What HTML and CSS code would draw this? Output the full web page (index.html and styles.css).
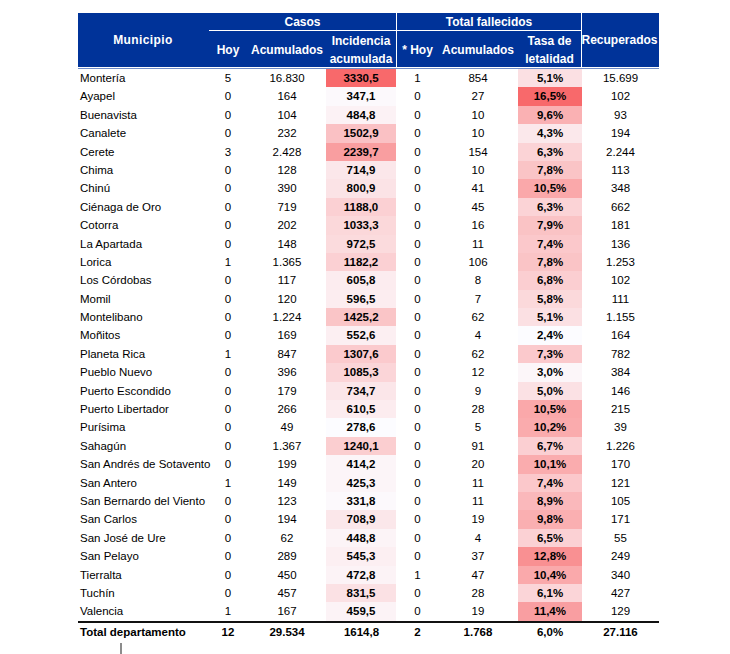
FILE: index.html
```html
<!DOCTYPE html>
<html lang="es">
<head>
<meta charset="utf-8">
<title>Casos por municipio</title>
<link rel="stylesheet" href="styles.css">
</head>
<body>
<div class="page">
  <div class="tbl">
    <div class="head">
      <div class="h muni">Municipio</div>
      <div class="h casos">Casos</div>
      <div class="h fall">Total fallecidos</div>
      <div class="h recup">Recuperados</div>
      <div class="h sub c2">Hoy</div>
      <div class="h sub c3">Acumulados</div>
      <div class="h sub c4 div">Incidencia<br>acumulada</div>
      <div class="h sub c5">* Hoy</div>
      <div class="h sub c6">Acumulados</div>
      <div class="h sub c7 div">Tasa de<br>letalidad</div>
    </div>
    <div class="sep"></div>
    <div class="body">
      <div class="row"><span class="name">Montería</span><span>5</span><span>16.830</span><span class="inc">3330,5</span><span>1</span><span>854</span><span class="tasa">5,1%</span><span>15.699</span></div>
      <div class="row"><span class="name">Ayapel</span><span>0</span><span>164</span><span class="inc">347,1</span><span>0</span><span>27</span><span class="tasa">16,5%</span><span>102</span></div>
      <div class="row"><span class="name">Buenavista</span><span>0</span><span>104</span><span class="inc">484,8</span><span>0</span><span>10</span><span class="tasa">9,6%</span><span>93</span></div>
      <div class="row"><span class="name">Canalete</span><span>0</span><span>232</span><span class="inc">1502,9</span><span>0</span><span>10</span><span class="tasa">4,3%</span><span>194</span></div>
      <div class="row"><span class="name">Cerete</span><span>3</span><span>2.428</span><span class="inc">2239,7</span><span>0</span><span>154</span><span class="tasa">6,3%</span><span>2.244</span></div>
      <div class="row"><span class="name">Chima</span><span>0</span><span>128</span><span class="inc">714,9</span><span>0</span><span>10</span><span class="tasa">7,8%</span><span>113</span></div>
      <div class="row"><span class="name">Chinú</span><span>0</span><span>390</span><span class="inc">800,9</span><span>0</span><span>41</span><span class="tasa">10,5%</span><span>348</span></div>
      <div class="row"><span class="name">Ciénaga de Oro</span><span>0</span><span>719</span><span class="inc">1188,0</span><span>0</span><span>45</span><span class="tasa">6,3%</span><span>662</span></div>
      <div class="row"><span class="name">Cotorra</span><span>0</span><span>202</span><span class="inc">1033,3</span><span>0</span><span>16</span><span class="tasa">7,9%</span><span>181</span></div>
      <div class="row"><span class="name">La Apartada</span><span>0</span><span>148</span><span class="inc">972,5</span><span>0</span><span>11</span><span class="tasa">7,4%</span><span>136</span></div>
      <div class="row"><span class="name">Lorica</span><span>1</span><span>1.365</span><span class="inc">1182,2</span><span>0</span><span>106</span><span class="tasa">7,8%</span><span>1.253</span></div>
      <div class="row"><span class="name">Los Córdobas</span><span>0</span><span>117</span><span class="inc">605,8</span><span>0</span><span>8</span><span class="tasa">6,8%</span><span>102</span></div>
      <div class="row"><span class="name">Momil</span><span>0</span><span>120</span><span class="inc">596,5</span><span>0</span><span>7</span><span class="tasa">5,8%</span><span>111</span></div>
      <div class="row"><span class="name">Montelibano</span><span>0</span><span>1.224</span><span class="inc">1425,2</span><span>0</span><span>62</span><span class="tasa">5,1%</span><span>1.155</span></div>
      <div class="row"><span class="name">Moñitos</span><span>0</span><span>169</span><span class="inc">552,6</span><span>0</span><span>4</span><span class="tasa">2,4%</span><span>164</span></div>
      <div class="row"><span class="name">Planeta Rica</span><span>1</span><span>847</span><span class="inc">1307,6</span><span>0</span><span>62</span><span class="tasa">7,3%</span><span>782</span></div>
      <div class="row"><span class="name">Pueblo Nuevo</span><span>0</span><span>396</span><span class="inc">1085,3</span><span>0</span><span>12</span><span class="tasa">3,0%</span><span>384</span></div>
      <div class="row"><span class="name">Puerto Escondido</span><span>0</span><span>179</span><span class="inc">734,7</span><span>0</span><span>9</span><span class="tasa">5,0%</span><span>146</span></div>
      <div class="row"><span class="name">Puerto Libertador</span><span>0</span><span>266</span><span class="inc">610,5</span><span>0</span><span>28</span><span class="tasa">10,5%</span><span>215</span></div>
      <div class="row"><span class="name">Purísima</span><span>0</span><span>49</span><span class="inc">278,6</span><span>0</span><span>5</span><span class="tasa">10,2%</span><span>39</span></div>
      <div class="row"><span class="name">Sahagún</span><span>0</span><span>1.367</span><span class="inc">1240,1</span><span>0</span><span>91</span><span class="tasa">6,7%</span><span>1.226</span></div>
      <div class="row"><span class="name">San Andrés de Sotavento</span><span>0</span><span>199</span><span class="inc">414,2</span><span>0</span><span>20</span><span class="tasa">10,1%</span><span>170</span></div>
      <div class="row"><span class="name">San Antero</span><span>1</span><span>149</span><span class="inc">425,3</span><span>0</span><span>11</span><span class="tasa">7,4%</span><span>121</span></div>
      <div class="row"><span class="name">San Bernardo del Viento</span><span>0</span><span>123</span><span class="inc">331,8</span><span>0</span><span>11</span><span class="tasa">8,9%</span><span>105</span></div>
      <div class="row"><span class="name">San Carlos</span><span>0</span><span>194</span><span class="inc">708,9</span><span>0</span><span>19</span><span class="tasa">9,8%</span><span>171</span></div>
      <div class="row"><span class="name">San José de Ure</span><span>0</span><span>62</span><span class="inc">448,8</span><span>0</span><span>4</span><span class="tasa">6,5%</span><span>55</span></div>
      <div class="row"><span class="name">San Pelayo</span><span>0</span><span>289</span><span class="inc">545,3</span><span>0</span><span>37</span><span class="tasa">12,8%</span><span>249</span></div>
      <div class="row"><span class="name">Tierralta</span><span>0</span><span>450</span><span class="inc">472,8</span><span>1</span><span>47</span><span class="tasa">10,4%</span><span>340</span></div>
      <div class="row"><span class="name">Tuchín</span><span>0</span><span>457</span><span class="inc">831,5</span><span>0</span><span>28</span><span class="tasa">6,1%</span><span>427</span></div>
      <div class="row"><span class="name">Valencia</span><span>1</span><span>167</span><span class="inc">459,5</span><span>0</span><span>19</span><span class="tasa">11,4%</span><span>129</span></div>
    </div>
    <div class="row total"><span class="name">Total departamento</span><span>12</span><span>29.534</span><span>1614,8</span><span>2</span><span>1.768</span><span>6,0%</span><span>27.116</span></div>
  </div>
  <div class="mark"></div>
</div>
<script src="script.js"></script>
</body>
</html>
```

FILE: styles.css
```css
html, body {
  margin: 0;
  padding: 0;
  background: #ffffff;
}
.page {
  position: relative;
  width: 730px;
  height: 654px;
  padding: 13px 0 0 78px;
  box-sizing: border-box;
  font-family: "Liberation Sans", Arial, sans-serif;
  color: #000;
}
.tbl {
  width: 581px;
}
.head,
.row {
  display: grid;
  grid-template-columns: 130px 40px 78px 71px 41px 80px 64px 77px;
}
.head {
  grid-template-rows: 18px 36px;
  background: #003399;
  color: #ffffff;
  font-weight: bold;
  font-size: 12px;
  line-height: 18px;
}
.h {
  display: flex;
  align-items: center;
  justify-content: center;
  text-align: center;
  box-sizing: border-box;
  white-space: nowrap;
}
.muni {
  grid-column: 1;
  grid-row: 1 / 3;
  letter-spacing: 0.4px;
}
.casos {
  grid-column: 2 / 5;
  grid-row: 1;
  border-bottom: 1px solid #ffffff;
  border-right: 1px solid #ffffff;
  margin-left: 1px;
}
.fall {
  grid-column: 5 / 8;
  grid-row: 1;
  border-bottom: 1px solid #ffffff;
  border-right: 1px solid #ffffff;
}
.recup {
  grid-column: 8;
  grid-row: 1 / 3;
  padding-right: 2px;
}
.sub { grid-row: 2; padding-top: 1px; }
.c2 { grid-column: 2; }
.c3 { grid-column: 3; }
.c4 { grid-column: 4; }
.c5 { grid-column: 5; }
.c6 { grid-column: 6; }
.c7 { grid-column: 7; }
.div {
  border-right: 1px solid #ffffff;
}
.sep {
  height: 1px;
  margin-top: 1px;
  background: #6f8cc8;
}
.row {
  height: 18.4px;
  font-size: 11.5px;
  line-height: 19px;
}
.row span {
  text-align: center;
  white-space: nowrap;
}
.row .name {
  text-align: left;
  padding-left: 2px;
}
.row .inc {
  font-weight: bold;
  margin-right: 1px;
}
.row .tasa {
  font-weight: bold;
}
.total {
  height: 18px;
  line-height: 19px;
  border-top: 2px solid #111111;
  font-weight: bold;
  font-size: 11.5px;
}
.mark {
  position: absolute;
  left: 120px;
  top: 643px;
  width: 2px;
  height: 11px;
  background: #8c8c8c;
}
```

FILE: script.js
```js
(function () {
  var lo = [252, 252, 255];
  var hi = [248, 105, 107];
  function paint(sel) {
    var cells = document.querySelectorAll(sel);
    var vals = [];
    cells.forEach(function (c) {
      vals.push(parseFloat(c.textContent.replace('%', '').replace(',', '.')));
    });
    var mn = Math.min.apply(null, vals);
    var mx = Math.max.apply(null, vals);
    cells.forEach(function (c, i) {
      var t = (vals[i] - mn) / (mx - mn);
      var rgb = lo.map(function (v, k) { return Math.round(v + (hi[k] - v) * t); });
      c.style.background = 'rgb(' + rgb.join(',') + ')';
    });
  }
  paint('.body .inc');
  paint('.body .tasa');
})();
```
